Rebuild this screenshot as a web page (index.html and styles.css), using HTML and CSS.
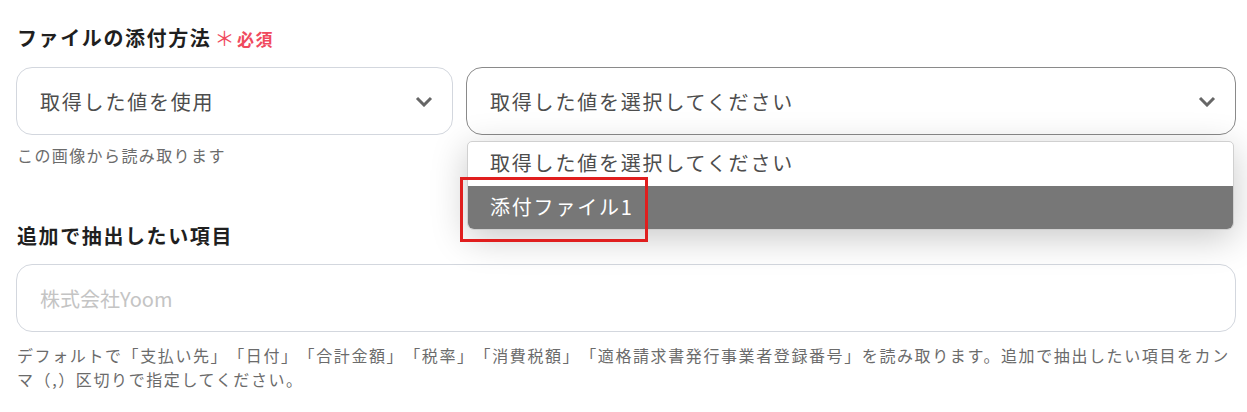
FILE: index.html
```html
<!DOCTYPE html>
<html lang="ja">
<head>
<meta charset="utf-8">
<link rel="stylesheet" href="styles.css">
</head>
<body>
<div class="form">
  <div class="field">
    <div class="label">ファイルの添付方法<span class="req"><span class="ast">＊</span>必須</span></div>
    <div class="row">
      <div class="col">
        <div class="select">
          <span class="value">取得した値を使用</span>
          <svg class="chev" width="18" height="11" viewBox="0 0 18 11"><path d="M2 2 L9 9 L16 2" fill="none" stroke="#666" stroke-width="3"/></svg>
        </div>
        <div class="help">この画像から読み取ります</div>
      </div>
      <div class="col right">
        <div class="select focused">
          <span class="value">取得した値を選択してください</span>
          <svg class="chev" width="18" height="11" viewBox="0 0 18 11"><path d="M2 2 L9 9 L16 2" fill="none" stroke="#666" stroke-width="3"/></svg>
        </div>
        <div class="menu">
          <div class="opt">取得した値を選択してください</div>
          <div class="opt active">添付ファイル1</div>
        </div>
        <div class="mark"></div>
      </div>
    </div>
  </div>
  <div class="field second">
    <div class="label">追加で抽出したい項目</div>
    <div class="input"><span class="ph">株式会社Yoom</span></div>
    <div class="help long">デフォルトで「支払い先」「日付」「合計金額」「税率」「消費税額」「適格請求書発行事業者登録番号」を読み取ります。追加で抽出したい項目をカンマ（,）区切りで指定してください。</div>
  </div>
</div>
</body>
</html>
```
FILE: styles.css
```css
html, body {
  margin: 0;
  padding: 0;
  background: #fff;
}
body {
  font-family: "Noto Sans CJK JP", "Noto Sans", sans-serif;
  color: #333;
  text-spacing-trim: space-all;
}
.form {
  padding: 26px 11px 0 16px;
  width: 1220px;
}
.label {
  font-size: 20px;
  font-weight: 700;
  line-height: 24px;
  color: #1f1f1f;
  letter-spacing: 1.6px;
  padding-left: 1px;
  margin-bottom: 16px;
}
.req {
  color: #f04a5e;
  font-size: 17px;
  margin-left: 3px;
}
.ast {
  font-size: 20px;
  font-weight: 400;
  margin-right: 1px;
}
.row {
  display: grid;
  grid-template-columns: 437px 1fr;
  gap: 13px;
}
.col {
  position: relative;
}
.select {
  height: 68px;
  box-sizing: border-box;
  border: 1px solid #d3d7de;
  border-radius: 16px;
  display: flex;
  align-items: center;
  justify-content: space-between;
  padding: 0 19px 0 23px;
  background: #fff;
}
.select.focused {
  border-color: #8a8a8a;
}
.value {
  font-size: 20px;
  letter-spacing: 1.8px;
  color: #4d4d4d;
}
.help {
  font-size: 16px;
  line-height: 20px;
  color: #6b6b6b;
  letter-spacing: 1.4px;
  margin-top: 10px;
  padding-left: 1px;
}
.menu {
  position: absolute;
  top: 74px;
  left: 1px;
  right: 2px;
  background: #fff;
  border: 1px solid #d0d0d0;
  border-radius: 5px 5px 7px 7px;
  overflow: hidden;
  box-shadow: 0 8px 36px rgba(0, 0, 0, 0.22);
}
.opt {
  height: 44px;
  display: flex;
  align-items: center;
  padding: 0 0 3px 22px;
  box-sizing: border-box;
  font-size: 20px;
  letter-spacing: 1.8px;
  color: #4d4d4d;
}
.opt.active {
  height: 43px;
  background: #777;
  color: #fff;
}
.mark {
  position: absolute;
  top: 110px;
  left: -6px;
  width: 182px;
  height: 59px;
  border: 3px solid #e01e1e;
}
.second {
  margin-top: 59px;
}
.input {
  height: 68px;
  box-sizing: border-box;
  border: 1px solid #d3d7de;
  border-radius: 16px;
  display: flex;
  align-items: center;
  padding-left: 23px;
}
.ph {
  font-size: 20px;
  letter-spacing: 0;
  color: #c4c4c4;
}
.help.long {
  font-size: 16px;
  line-height: 24px;
  margin-top: 11px;
  letter-spacing: 1.6px;
}
```
